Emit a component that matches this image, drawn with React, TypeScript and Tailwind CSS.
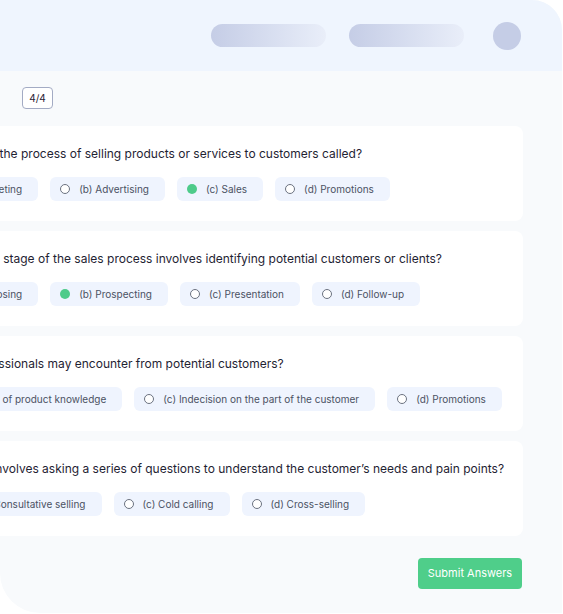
import React from "react"

type Question = {
  text: string
  shift: number
  rowShift: number
  options: string[]
  answer: number
}

const questions: Question[] = [
  {
    text: "What is the process of selling products or services to customers called?",
    shift: 46,
    rowShift: 70,
    options: ["(a) Marketing", "(b) Advertising", "(c) Sales", "(d) Promotions"],
    answer: 2,
  },
  {
    text: "Which stage of the sales process involves identifying potential customers or clients?",
    shift: 36,
    rowShift: 58,
    options: ["(a) Closing", "(b) Prospecting", "(c) Presentation", "(d) Follow-up"],
    answer: 1,
  },
  {
    text: "What are some common objections that sales professionals may encounter from potential customers?",
    shift: 293,
    rowShift: 212,
    options: ["(a) Price concerns", "(b) Lack of product knowledge", "(c) Indecision on the part of the customer", "(d) Promotions"],
    answer: -1,
  },
  {
    text: "Which sales technique involves asking a series of questions to understand the customer’s needs and pain points?",
    shift: 139,
    rowShift: 196,
    options: ["(a) Solution selling", "(b) Consultative selling", "(c) Cold calling", "(d) Cross-selling"],
    answer: -1,
  },
]

function Radio({ checked }: { checked: boolean }) {
  if (checked) {
    return <span className="block h-[10px] w-[10px] shrink-0 rounded-full bg-[#4ecb8a]" />
  }
  return <span className="block h-[10px] w-[10px] shrink-0 rounded-full border border-[#6b7280] bg-white" />
}

function QuestionCard({ q }: { q: Question }) {
  return (
    <div className="rounded-lg bg-white py-[20px] pl-[20px] pr-5">
      <p
        className="whitespace-nowrap text-[12px] leading-[16px] text-[#1f2333]"
        style={{ marginLeft: -q.shift }}
      >
        {q.text}
      </p>
      <div className="mt-[15px] flex gap-3" style={{ marginLeft: -q.rowShift }}>
        {q.options.map((opt, i) => (
          <div
            key={opt}
            className="flex h-[24px] shrink-0 items-center gap-[9px] whitespace-nowrap rounded-md bg-[#eff4fe] pl-[10px] pr-[16px] text-[10px] text-[#4b5263]"
          >
            <Radio checked={i === q.answer} />
            <span>{opt}</span>
          </div>
        ))}
      </div>
    </div>
  )
}

export default function App() {
  return (
    <div className="h-[614px] w-[563px] overflow-hidden bg-white" style={{ fontFamily: "Inter, 'Noto Sans', sans-serif" }}>
      <div className="h-[613px] w-[562px] overflow-hidden rounded-bl-[40px] rounded-tr-[30px] bg-[#f8fafc]">
        <div className="flex h-[71px] items-center justify-end gap-[23px] bg-[#eff5fe] pr-[41px]">
          <div className="h-[23px] w-[115px] rounded-full bg-gradient-to-r from-[#c5cde6] to-[#e9eef9]" />
          <div className="h-[23px] w-[115px] rounded-full bg-gradient-to-r from-[#c5cde6] to-[#e9eef9]" />
          <div className="ml-[6px] h-[28px] w-[28px] rounded-full bg-[#c5cde6]" />
        </div>
        <div className="pl-[22px] pr-[39px] pt-[16px]">
          <div className="flex h-[22px] w-[31px] items-center justify-center rounded-[4px] border border-[#a3abc4] bg-white text-[10px] text-[#1f2333]">
            4/4
          </div>
          <div className="-ml-[42px] mt-[17px] flex flex-col gap-[10px]">
            {questions.map((q) => (
              <QuestionCard key={q.text} q={q} />
            ))}
          </div>
          <div className="mt-[22px] flex justify-end pr-px">
            <button className="h-[31px] w-[104px] rounded-[4px] bg-[#4fce8a] text-[11px] text-white">
              Submit Answers
            </button>
          </div>
        </div>
      </div>
    </div>
  )
}
